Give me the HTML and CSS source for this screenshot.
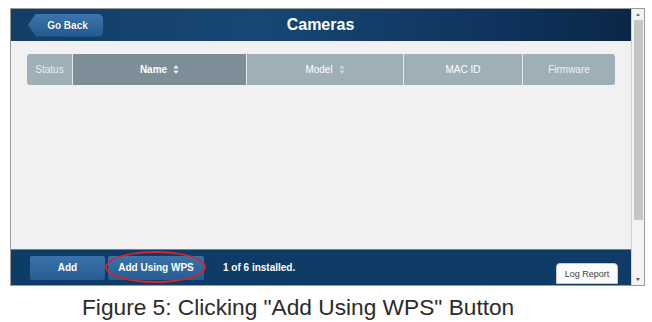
FILE: index.html
```html
<!DOCTYPE html>
<html lang="en">
<head>
  <meta charset="UTF-8">
  <title>Cameras</title>
  <link rel="stylesheet" href="styles.css">
</head>
<body>
  <div class="frame">
    <div class="app">
      <div class="head">
        <div class="back"><span>Go Back</span></div>
        <div class="title">Cameras</div>
        <div></div>
      </div>
      <div class="main">
        <ul class="thead">
          <li class="c-status">Status</li>
          <li class="c-name sel">Name <svg class="sort" viewBox="0 0 6 10"><polygon points="3,0 6,4 0,4"/><polygon points="0,6 6,6 3,10"/></svg></li>
          <li class="c-model">Model <svg class="sort dim" viewBox="0 0 6 10"><polygon points="3,0 6,4 0,4"/><polygon points="0,6 6,6 3,10"/></svg></li>
          <li class="c-mac">MAC ID</li>
          <li class="c-fw">Firmware</li>
        </ul>
      </div>
      <div class="foot">
        <span class="btn">Add</span>
        <span class="btn wps">Add Using WPS<b class="ring"></b></span>
        <span class="count">1 of 6 installed.</span>
        <span class="log">Log Report</span>
      </div>
    </div>
    <div class="scroll">
      <span class="arr up"></span>
      <span class="thumb"></span>
      <span class="arr down"></span>
    </div>
  </div>
  <p class="caption">Figure 5: Clicking "Add Using WPS" Button</p>
</body>
</html>
```

FILE: styles.css
```css
*{
  margin: 0;
  padding: 0;
  box-sizing: border-box;
}
body{
  background: #fff;
  font-family: "Liberation Sans", Arial, sans-serif;
  padding: 8px 0 0 10px;
}
ul,li{
  list-style: none;
}
.frame{
  width: 635px;
  height: 278px;
  border: 1px solid #9a9a9a;
  display: flex;
  background: #f2f2f2;
}
.app{
  width: 620px;
  display: flex;
  flex-direction: column;
}
.head{
  height: 32px;
  background: linear-gradient(90deg, #123e68 0%, #184773 40%, #0f3560 75%, #0a2748 100%);
  display: grid;
  grid-template-columns: 1fr auto 1fr;
  align-items: center;
  padding-left: 17px;
}
.back{
  width: 75px;
  height: 23px;
  background: linear-gradient(#3c76ad, #215990);
  border-radius: 3px 5px 5px 3px;
  clip-path: polygon(8px 0, 100% 0, 100% 100%, 8px 100%, 0 50%);
  color: #fff;
  font-size: 10px;
  font-weight: bold;
  display: flex;
  align-items: center;
  justify-content: center;
  padding-left: 4px;
  text-shadow: 0 0 1px #0a2a4d;
}
.title{
  color: #fff;
  font-size: 16px;
  font-weight: bold;
  padding-right: 18px;
}
.main{
  flex: 1;
  background: #f1f1f1;
  padding: 13px 0 0 16px;
}
.thead{
  display: flex;
  width: 588px;
  height: 31px;
  border-radius: 3px;
  overflow: hidden;
  background: #9eafb8;
}
.thead li{
  display: flex;
  align-items: center;
  justify-content: center;
  color: #fff;
  font-size: 10px;
  border-right: 1px solid #e4eaed;
}
.thead li:last-child{
  border-right: none;
}
.c-status{ width: 46px; color: #e8eef1 !important; }
.c-name{ width: 174px; font-weight: bold; }
.c-model{ width: 157px; }
.c-mac{ width: 119px; }
.c-fw{ width: 92px; color: #eef2f4 !important; }
.sel{
  background: #7d8e99;
}
.sort{
  width: 6px;
  height: 9px;
  margin-left: 6px;
  fill: #e9eef0;
}
.dim{
  opacity: 0.6;
}
.foot{
  height: 36px;
  background: #0f3c66;
  border-top: 1px solid #6d8299;
  display: flex;
  align-items: center;
  padding-left: 19px;
  position: relative;
}
.btn{
  height: 24px;
  width: 75px;
  margin-right: 3px;
  background: linear-gradient(#3a73aa, #255d93);
  color: #fff;
  font-size: 10px;
  font-weight: bold;
  display: flex;
  align-items: center;
  justify-content: center;
  border-radius: 2px;
}
.wps{
  width: 96px;
  position: relative;
}
.ring{
  position: absolute;
  left: -3px;
  top: -5px;
  width: 101px;
  height: 32px;
  border: 2px solid #d8232f;
  border-radius: 50%;
}
.count{
  color: #fff;
  font-size: 10px;
  font-weight: bold;
  margin-left: 16px;
}
.log{
  margin-left: auto;
  margin-right: 13px;
  align-self: flex-end;
  margin-bottom: 1px;
  width: 62px;
  height: 21px;
  background: #fbfbfb;
  border: 1px solid #c9c9c9;
  border-radius: 4px 4px 0 0;
  color: #444;
  font-size: 9px;
  display: flex;
  align-items: center;
  justify-content: center;
}
.scroll{
  width: 13px;
  display: flex;
  flex-direction: column;
  align-items: center;
  background: #f3f3f3;
  border-left: 1px solid #d0d0d0;
  padding: 4px 0;
}
.thumb{
  width: 9px;
  height: 200px;
  margin: 4px 0 auto;
  background: #c5c5c5;
  border-radius: 1px;
}
.arr{
  width: 0;
  height: 0;
  border-left: 2px solid transparent;
  border-right: 2px solid transparent;
}
.up{
  border-bottom: 3px solid #777;
}
.down{
  border-top: 3px solid #555;
}
.caption{
  font-size: 22.7px;
  color: #2b2b2b;
  padding: 8px 0 0 72px;
}
```
